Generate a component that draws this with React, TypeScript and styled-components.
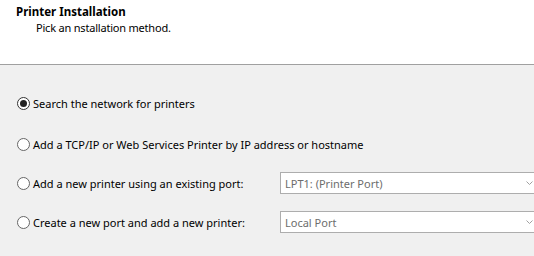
import React from "react";
import styled, { createGlobalStyle } from "styled-components";

const GlobalStyle = createGlobalStyle`
  html, body {
    margin: 0;
    padding: 0;
    background: #f0f0f0;
  }
  body {
    font-family: "Noto Sans", "Liberation Sans", sans-serif;
    font-size: 11px;
    color: #000;
  }
`;

const Page = styled.div`
  width: 534px;
  height: 256px;
  overflow: hidden;
  background: #f0f0f0;
`;

const Header = styled.div`
  height: 65px;
  box-sizing: border-box;
  background: #fff;
  border-bottom: 1px solid #a0a0a0;
  padding: 4px 0 0 16px;
`;

const Title = styled.div`
  font-weight: 700;
  font-size: 11.5px;
  line-height: 16px;
`;

const Subtitle = styled.div`
  padding-left: 20px;
  line-height: 15px;
  letter-spacing: -0.2px;
`;

const Options = styled.div`
  display: flex;
  flex-direction: column;
  gap: 17px;
  padding: 27px 0 0 17px;
`;

const Row = styled.div<{ $extra?: number }>`
  display: grid;
  grid-template-columns: 263px 258px;
  align-items: center;
  height: 22px;
  margin-bottom: ${(p) => p.$extra ?? 0}px;
`;

const Label = styled.label`
  display: flex;
  align-items: center;
  gap: 3px;
  white-space: nowrap;
`;

const Radio = styled.span<{ $checked?: boolean }>`
  width: 11px;
  height: 11px;
  border-radius: 50%;
  border: 1px solid ${(p) => (p.$checked ? "#333" : "#666")};
  background: #fff;
  display: flex;
  align-items: center;
  justify-content: center;
  flex-shrink: 0;

  &::after {
    content: "";
    width: 7px;
    height: 7px;
    border-radius: 50%;
    background: #222;
    display: ${(p) => (p.$checked ? "block" : "none")};
  }
`;

const Combo = styled.div`
  height: 22px;
  box-sizing: border-box;
  border: 1px solid #adadad;
  background: #fff;
  display: flex;
  align-items: center;
  justify-content: space-between;
  padding: 0 4px 0 4px;
  color: #6d6d6d;
`;

const Chevron = () => (
  <svg width="7" height="4" viewBox="0 0 7 4">
    <path d="M0.5 0.5 L3.5 3.5 L6.5 0.5" fill="none" stroke="#a0a0a0" strokeWidth="1" />
  </svg>
);

const App = () => {
  return (
    <Page>
      <GlobalStyle />
      <Header>
        <Title>Printer Installation</Title>
        <Subtitle>Pick an nstallation method.</Subtitle>
      </Header>
      <Options>
        <Row $extra={2}>
          <Label>
            <Radio $checked />
            Search the network for printers
          </Label>
        </Row>
        <Row>
          <Label>
            <Radio />
            Add a TCP/IP or Web Services Printer by IP address or hostname
          </Label>
        </Row>
        <Row>
          <Label>
            <Radio />
            Add a new printer using an existing port:
          </Label>
          <Combo>
            LPT1: (Printer Port)
            <Chevron />
          </Combo>
        </Row>
        <Row>
          <Label>
            <Radio />
            Create a new port and add a new printer:
          </Label>
          <Combo>
            Local Port
            <Chevron />
          </Combo>
        </Row>
      </Options>
    </Page>
  );
};

export default App;
